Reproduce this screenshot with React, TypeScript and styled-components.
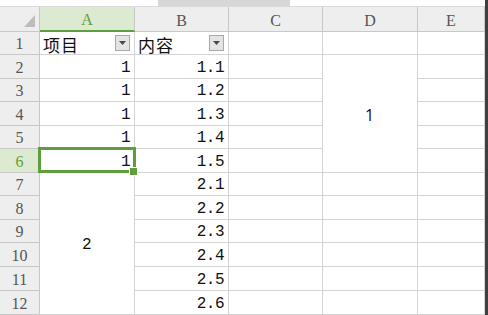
import React from "react";
import styled, { createGlobalStyle, css } from "styled-components";

const Global = createGlobalStyle`
  html, body { margin: 0; padding: 0; background: #fff; overflow: hidden; }
  * { box-sizing: border-box; }
`;

const GREEN = "#5f9e3e";
const GRID = "#d4d4d4";
const HEAD_BORDER = "#c8c8c8";

const Frame = styled.div`
  display: flex;
  width: 488px;
  height: 315px;
  overflow: hidden;
`;

const Main = styled.div`
  display: flex;
  flex-direction: column;
  width: 485px;
`;

const Scrollbar = styled.div`
  width: 3px;
  background: #3f3f3f;
`;

const TopStrip = styled.div`
  height: 7px;
  display: flex;
  background: #fff;
  border-bottom: 1px solid #d9d9d9;
`;

const Tab = styled.div`
  margin-left: 158px;
  width: 132px;
  height: 6px;
  background: #d7d7d7;
`;

const Sheet = styled.div`
  display: grid;
  grid-template-columns: 40px 95px 94px 94px 95px 67px;
  grid-template-rows: 25px 23px 24px 23px 24px 23px 24px 23px 24px 23px 24px 24px 24px;
`;

const Corner = styled.div`
  grid-row: 1;
  grid-column: 1;
  background: #eeeeee;
  border-right: 1px solid ${HEAD_BORDER};
  border-bottom: 1px solid ${HEAD_BORDER};
  display: flex;
  align-items: flex-end;
  justify-content: flex-end;
  padding: 0 4px 4px 0;
`;

const ColHead = styled.div<{ $col: number; $active?: boolean }>`
  grid-row: 1;
  grid-column: ${(p) => p.$col};
  background: ${(p) => (p.$active ? "#dbead0" : "#eeeeee")};
  border-right: 1px solid ${HEAD_BORDER};
  border-bottom: ${(p) => (p.$active ? `2px solid ${GREEN}` : `1px solid ${HEAD_BORDER}`)};
  color: ${(p) => (p.$active ? GREEN : "#555")};
  font-family: "Liberation Serif", serif;
  font-size: 16px;
  display: flex;
  align-items: center;
  justify-content: center;
  padding-top: 3px;
`;

const RowHead = styled.div<{ $row: number; $active?: boolean }>`
  grid-row: ${(p) => p.$row};
  grid-column: 1;
  background: ${(p) => (p.$active ? "#dbead0" : "#eeeeee")};
  border-right: 1px solid ${HEAD_BORDER};
  border-bottom: 1px solid ${HEAD_BORDER};
  color: ${(p) => (p.$active ? GREEN : "#555")};
  font-family: "Liberation Serif", serif;
  font-size: 16px;
  display: flex;
  align-items: center;
  justify-content: center;
  padding-top: 2px;
`;

type Align = "left" | "right" | "center";

const Cell = styled.div<{
  $row: number;
  $col: number;
  $span?: number;
  $align?: Align;
  $sans?: boolean;
  $selected?: boolean;
}>`
  grid-row: ${(p) => p.$row} / span ${(p) => p.$span ?? 1};
  grid-column: ${(p) => p.$col};
  position: relative;
  background: #fff;
  border-right: 1px solid ${GRID};
  border-bottom: 1px solid ${GRID};
  color: #111;
  font-family: ${(p) => (p.$sans ? '"Open Sans", "Noto Sans", sans-serif' : '"Liberation Mono", monospace')};
  font-size: 16px;
  letter-spacing: ${(p) => (p.$sans ? "0" : "-0.5px")};
  display: flex;
  align-items: center;
  padding: 2px 4px 0 3px;
  justify-content: ${(p) =>
    p.$align === "right" ? "flex-end" : p.$align === "center" ? "center" : "space-between"};
  ${(p) =>
    p.$selected &&
    css`
      &::after {
        content: "";
        position: absolute;
        left: -2px;
        top: -2px;
        right: -2px;
        bottom: -1px;
        border: 3px solid ${GREEN};
        pointer-events: none;
        z-index: 2;
      }
      &::before {
        content: "";
        position: absolute;
        right: -4px;
        bottom: -4px;
        width: 7px;
        height: 7px;
        background: ${GREEN};
        border: 1px solid #fff;
        z-index: 3;
      }
    `}
`;

const HeaderLabel = styled.span`
  font-family: "Noto Sans CJK SC", sans-serif;
  font-size: 17px;
  color: #111;
  letter-spacing: 1px;
  line-height: 1;
`;

const FilterButton = styled.span`
  width: 15px;
  height: 16px;
  background: #e4e4e4;
  border: 1px solid #a9a9a9;
  display: flex;
  align-items: center;
  justify-content: center;
  margin-top: -2px;
`;

const Filter = () => (
  <FilterButton>
    <svg width="7" height="4" viewBox="0 0 7 4">
      <path d="M0 0 L7 0 L3.5 4 Z" fill="#4a4a4a" />
    </svg>
  </FilterButton>
);

const cols = ["A", "B", "C", "D", "E"];
const bValues = ["1.1", "1.2", "1.3", "1.4", "1.5", "2.1", "2.2", "2.3", "2.4", "2.5", "2.6"];
const rowNums = Array.from({ length: 12 }, (_, i) => i + 1);

export default function App() {
  return (
    <>
      <Global />
      <Frame>
        <Main>
          <TopStrip>
            <Tab />
          </TopStrip>
          <Sheet>
            <Corner>
              <svg width="11" height="12" viewBox="0 0 11 12">
                <path d="M11 0 L11 12 L0 12 Z" fill="#bdbdbd" />
              </svg>
            </Corner>
            {cols.map((c, i) => (
              <ColHead key={c} $col={i + 2} $active={c === "A"}>
                {c}
              </ColHead>
            ))}

            {rowNums.map((r) => (
              <RowHead key={`h${r}`} $row={r + 1} $active={r === 6}>
                {r}
              </RowHead>
            ))}

            {/* Row 1: table headers */}
            <Cell $row={2} $col={2}>
              <HeaderLabel>项目</HeaderLabel>
              <Filter />
            </Cell>
            <Cell $row={2} $col={3}>
              <HeaderLabel>内容</HeaderLabel>
              <Filter />
            </Cell>

            {/* Column A values */}
            {[2, 3, 4, 5, 6].map((r) => (
              <Cell key={`a${r}`} $row={r + 1} $col={2} $align="right" $selected={r === 6}>
                1
              </Cell>
            ))}
            <Cell $row={8} $col={2} $span={6} $align="center">
              2
            </Cell>

            {/* Column B values */}
            {bValues.map((v, i) => (
              <Cell key={`b${i}`} $row={i + 3} $col={3} $align="right">
                {v}
              </Cell>
            ))}

            {/* Column C */}
            {rowNums.map((r) => (
              <Cell key={`c${r}`} $row={r + 1} $col={4} />
            ))}

            {/* Column D */}
            <Cell $row={2} $col={5} />
            <Cell $row={3} $col={5} $span={5} $align="center" $sans>
              1
            </Cell>
            {[7, 8, 9, 10, 11, 12].map((r) => (
              <Cell key={`d${r}`} $row={r + 1} $col={5} />
            ))}

            {/* Column E */}
            {rowNums.map((r) => (
              <Cell key={`e${r}`} $row={r + 1} $col={6} />
            ))}
          </Sheet>
        </Main>
        <Scrollbar />
      </Frame>
    </>
  );
}
